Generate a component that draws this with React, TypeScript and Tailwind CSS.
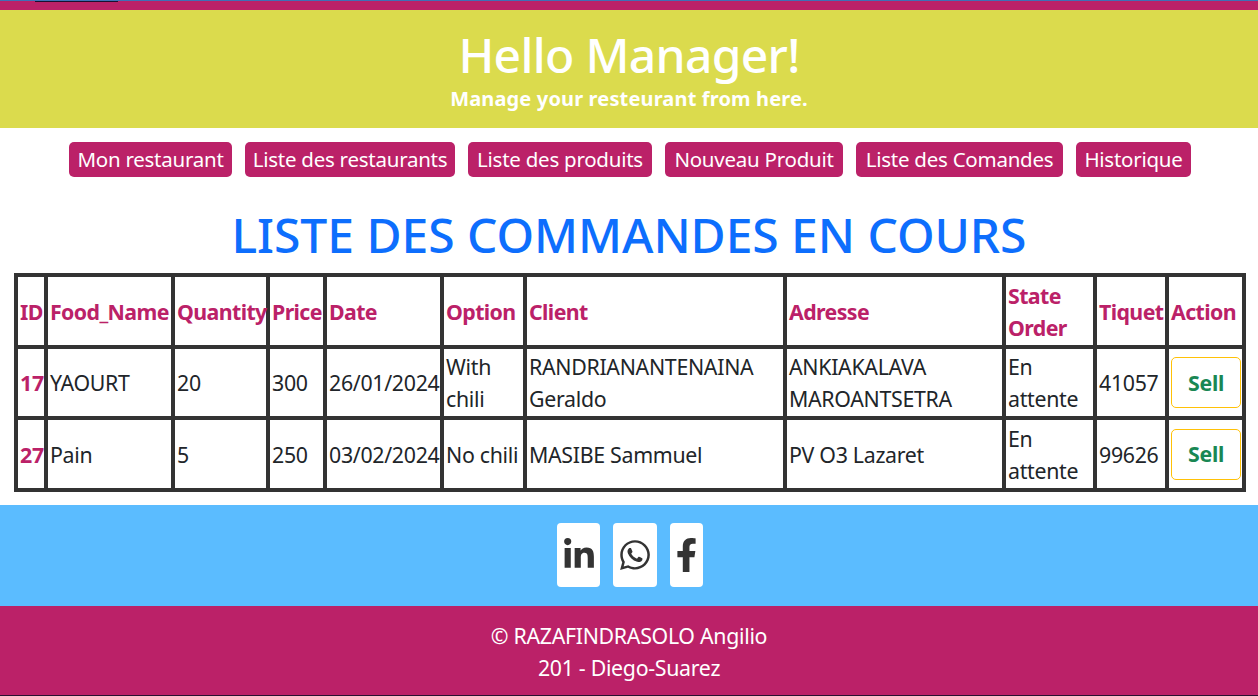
import { FaFacebookF, FaLinkedinIn, FaWhatsapp } from "react-icons/fa";

const NAV_LINKS = [
  { label: "Mon restaurant", width: "w-[163px]" },
  { label: "Liste des restaurants", width: "w-[210px]" },
  { label: "Liste des produits", width: "w-[184px]" },
  { label: "Nouveau Produit", width: "w-[178px]" },
  { label: "Liste des Comandes", width: "w-[207px]" },
  { label: "Historique", width: "w-[115px]" },
];

const COLUMNS = [
  { label: "ID", width: "w-[30px]" },
  { label: "Food_Name", width: "w-[127px]" },
  { label: "Quantity", width: "w-[95px]" },
  { label: "Price", width: "w-[57px]" },
  { label: "Date", width: "w-[117px]" },
  { label: "Option", width: "w-[83px]" },
  { label: "Client", width: "w-[260px]" },
  { label: "Adresse", width: "w-[219px]" },
  { label: "State Order", width: "w-[91px]" },
  { label: "Tiquet", width: "w-[72px]" },
  { label: "Action", width: "w-[77px]" },
];

const ORDERS = [
  {
    id: 17,
    food: "YAOURT",
    quantity: 20,
    price: 300,
    date: "26/01/2024",
    option: "With chili",
    client: "RANDRIANANTENAINA Geraldo",
    address: "ANKIAKALAVA MAROANTSETRA",
    state: "En attente",
    ticket: 41057,
    rowHeight: "h-[71px]",
    offset: "pt-0",
  },
  {
    id: 27,
    food: "Pain",
    quantity: 5,
    price: 250,
    date: "03/02/2024",
    option: "No chili",
    client: "MASIBE Sammuel",
    address: "PV O3 Lazaret",
    state: "En attente",
    ticket: 99626,
    rowHeight: "h-[72px]",
    offset: "pt-[1px]",
  },
];

const cell = "border-4 border-[#333333] px-[2px] pb-0 text-left align-middle";

export default function App() {
  return (
    <div className="h-[696px] overflow-hidden bg-white font-['Noto_Sans',sans-serif] text-[21.33px] leading-[32px] tracking-[-0.3px] text-[#212529]">
      <div className="h-[10px] border-t border-[#3f6fb5] bg-[#bb2168]">
        <div className="ml-[35px] h-[1px] w-[83px] bg-[#1a1030]" />
      </div>

      <header className="flex h-[118px] flex-col items-center bg-[#dbdb4d] pt-[16px] text-white">
        <h1 className="text-[48px] font-medium leading-[58px] tracking-[-0.7px]">Hello Manager!</h1>
        <p className="text-[20px] font-bold leading-[30px] tracking-[0.15px]">Manage your resteurant from here.</p>
      </header>

      <nav className="mt-[14px] flex justify-center gap-[13px] pl-[2px]">
        {NAV_LINKS.map((link) => (
          <a
            key={link.label}
            className={`${link.width} flex h-[35px] items-center justify-center whitespace-nowrap rounded-[5px] bg-[#bb2168] pb-[1px] text-[20.5px] tracking-[-0.25px] text-white`}
          >
            {link.label}
          </a>
        ))}
      </nav>

      <h2 className="mt-[29px] text-center text-[48px] font-medium leading-[58px] tracking-[-0.05px] text-[#0d6efd]">
        LISTE DES COMMANDES EN COURS
      </h2>

      <table className="ml-[14px] mt-[9px] w-[1228px] table-fixed border-collapse">
        <thead>
          <tr className="h-[72px]">
            {COLUMNS.map((col) => (
              <th key={col.label} className={`${cell} ${col.width} pt-[1px] font-bold tracking-[-0.6px] text-[#bb2168]`}>
                {col.label}
              </th>
            ))}
          </tr>
        </thead>
        <tbody>
          {ORDERS.map((order) => (
            <tr key={order.id} className={order.rowHeight}>
              <td className={`${cell} ${order.offset} font-bold text-[#bb2168]`}>{order.id}</td>
              <td className={`${cell} ${order.offset}`}>{order.food}</td>
              <td className={`${cell} ${order.offset}`}>{order.quantity}</td>
              <td className={`${cell} ${order.offset}`}>{order.price}</td>
              <td className={`${cell} ${order.offset}`}>{order.date}</td>
              <td className={`${cell} ${order.offset}`}>{order.option}</td>
              <td className={`${cell} ${order.offset}`}>{order.client}</td>
              <td className={`${cell} ${order.offset}`}>{order.address}</td>
              <td className={`${cell} ${order.offset}`}>{order.state}</td>
              <td className={`${cell} ${order.offset}`}>{order.ticket}</td>
              <td className={`${cell} pt-0`}>
                <button
                  type="button"
                  className="flex h-[51px] w-[70px] items-center justify-center rounded-[5px] border border-[#ffc107] bg-white font-bold text-[#198754]"
                >
                  Sell
                </button>
              </td>
            </tr>
          ))}
        </tbody>
      </table>

      <div className="mt-[13px] flex h-[101px] items-center justify-center gap-[13px] bg-[#5bbcff] pb-[2px] pl-[2px] text-[#333333]">
        <a className="flex h-[64px] w-[43px] items-center justify-center rounded-[4px] bg-white">
          <FaLinkedinIn className="h-[34px] w-[34px]" />
        </a>
        <a className="flex h-[64px] w-[44px] items-center justify-center rounded-[4px] bg-white">
          <FaWhatsapp className="h-[34px] w-[34px]" />
        </a>
        <a className="flex h-[64px] w-[33px] items-center justify-center rounded-[4px] bg-white">
          <FaFacebookF className="h-[34px] w-[34px]" />
        </a>
      </div>

      <footer className="h-[90px] border-b border-[#2a1030] bg-[#bb2168] pt-[14px] text-center text-white">
        <p>© RAZAFINDRASOLO Angilio</p>
        <p>201 - Diego-Suarez</p>
      </footer>
    </div>
  );
}
